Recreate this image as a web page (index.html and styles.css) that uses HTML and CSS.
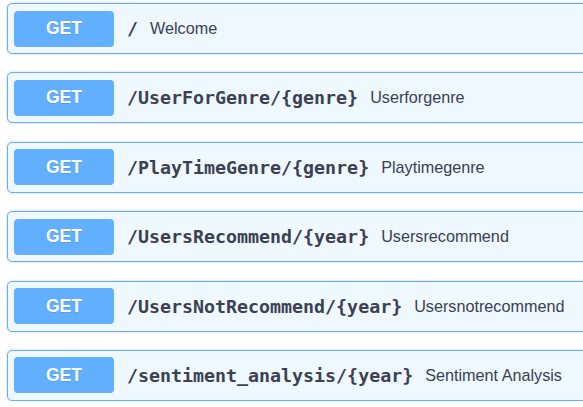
FILE: index.html
```html
<!DOCTYPE html>
<html>
<head>
<meta charset="utf-8">
<link rel="stylesheet" href="styles.css">
</head>
<body>
<div class="list">
  <div class="opblock"><span class="method">GET</span><span class="path">/</span><span class="desc">Welcome</span></div>
  <div class="opblock"><span class="method">GET</span><span class="path">/UserForGenre/{genre}</span><span class="desc">Userforgenre</span></div>
  <div class="opblock"><span class="method">GET</span><span class="path">/PlayTimeGenre/{genre}</span><span class="desc">Playtimegenre</span></div>
  <div class="opblock"><span class="method">GET</span><span class="path">/UsersRecommend/{year}</span><span class="desc">Usersrecommend</span></div>
  <div class="opblock"><span class="method">GET</span><span class="path">/UsersNotRecommend/{year}</span><span class="desc">Usersnotrecommend</span></div>
  <div class="opblock"><span class="method">GET</span><span class="path">/sentiment_analysis/{year}</span><span class="desc">Sentiment Analysis</span></div>
</div>
</body>
</html>
```
FILE: styles.css
```css
html, body {
  margin: 0;
  padding: 0;
  background: #ffffff;
  overflow: hidden;
}
.list {
  padding: 3px 0 0 7px;
  display: flex;
  flex-direction: column;
  gap: 18.4px;
  width: 640px;
}
.opblock {
  box-sizing: border-box;
  height: 51px;
  display: flex;
  align-items: center;
  padding: 0 6px;
  background: #eff7ff;
  border: 1px solid #61affe;
  border-radius: 5px;
  box-shadow: 0 0 3px rgba(0, 0, 0, 0.19);
}
.method {
  box-sizing: border-box;
  width: 100px;
  height: 36px;
  display: flex;
  align-items: center;
  justify-content: center;
  background: #61affe;
  color: #ffffff;
  border-radius: 4px;
  font-family: "Liberation Sans", Arial, sans-serif;
  font-weight: bold;
  font-size: 17.5px;
  text-shadow: 0 1px 0 rgba(0, 0, 0, 0.1);
}
.path {
  padding: 0 12px 0 13px;
  font-family: "DejaVu Sans Mono", monospace;
  font-weight: bold;
  font-size: 18.3px;
  color: #3b4151;
}
.desc {
  font-family: "Liberation Sans", Arial, sans-serif;
  font-size: 16.2px;
  color: #3b4151;
}
```
